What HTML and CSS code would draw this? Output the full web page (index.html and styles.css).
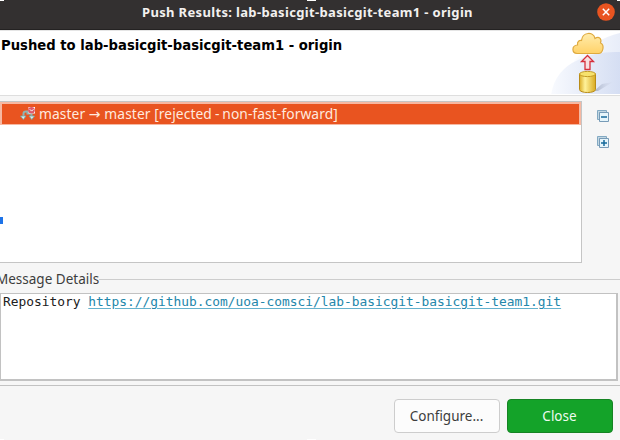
FILE: index.html
```
<!DOCTYPE html>
<html lang="en">
<head>
<meta charset="utf-8">
<title>Push Results</title>
<link rel="stylesheet" href="styles.css">
</head>
<body>
<main class="dialog">
  <header class="titlebar">
    <span class="title">Push Results: lab-basicgit-basicgit-team1 - origin</span>
    <svg class="close-icon" width="18" height="18" viewBox="0 0 18 18"><circle cx="9" cy="9" r="8.8" fill="#e95420"/><path d="M5.8 5.8l6.4 6.4M12.2 5.8l-6.4 6.4" stroke="#fff" stroke-width="1.5"/></svg>
  </header>
  <section class="banner">
    <h1 class="heading">Pushed to lab-basicgit-basicgit-team1 - origin</h1>
    <svg class="banner-art" width="70" height="63" viewBox="0 0 70 63">
      <defs>
        <linearGradient id="sky"><stop offset="0" stop-color="#f8fafe"/><stop offset="1" stop-color="#d5def3"/></linearGradient>
        <linearGradient id="cloud" x2="0" y2="1"><stop offset="0" stop-color="#ffecac"/><stop offset="1" stop-color="#ffd269"/></linearGradient>
        <linearGradient id="gold"><stop offset="0" stop-color="#dcae28"/><stop offset=".35" stop-color="#fff29a"/><stop offset="1" stop-color="#d9aa20"/></linearGradient>
        <linearGradient id="shade"><stop offset="0" stop-color="#a9b2c8"/><stop offset="1" stop-color="#d5dcee" stop-opacity=".3"/></linearGradient>
      </defs>
      <path d="M24 30Q44 8 70 2V64H24Z" fill="url(#sky)" opacity=".55"/>
      <path d="M1 64Q5 39 28 29Q46 20 70 21V64Z" fill="url(#sky)"/>
      <path d="M44 60L52 53L63 51L48 60Z" fill="url(#shade)"/>
      <path d="M27 22.500C21.500 22 21.500 14.500 27.500 14C27 10.500 29.500 9 31.500 9.500C32.500 0.500 43.500 0.500 45 7.500C49 4.500 52 8 50.500 12C55 14 53 22.500 48.500 22.500Z" fill="url(#cloud)" stroke="#dfaa3f" stroke-width="1.200"/>
      <path d="M37.500 24.500L43.500 30.500H40V38.500H35V30.500H31.500Z" fill="#f8dfe0" stroke="#d6303c" stroke-width="1.300"/>
      <path d="M29.500 43V58.500C29.500 62.500 45.500 62.500 45.500 58.500V43Z" fill="url(#gold)" stroke="#b98c18"/>
      <ellipse cx="37.500" cy="43" rx="8" ry="2.600" fill="#f7e26d" stroke="#c49b25"/>
    </svg>
  </section>
  <section class="results">
    <div class="tree">
      <div class="row">
        <svg class="ref-icon" width="16" height="16" viewBox="0 0 16 16"><path d="M3.500 11V7.500Q3.500 5.500 6 5.500H8.500M6.500 7.500h5v4" fill="none" stroke="#8fb5b2" stroke-width="2"/><path d="M.5 10h5.500L3.300 13.500zM9 10h5.500L11.800 13.500z" fill="#dbeeed" stroke="#70a4a5" stroke-width=".8"/><path d="M8.500 1h6.500v6.500H8.500z" fill="#fff"/><circle cx="11.500" cy="4.300" r="3.300" fill="#df5869"/><path d="M9.800 3.300l1.800 1.800 1.800-1.800" fill="none" stroke="#fff"/></svg>
        <span class="row-label">master <span class="arrow">→</span> master [rejected<span class="dash"> - </span>non-fast-forward]</span>
      </div>
      <i class="marker"></i>
    </div>
    <div class="tools">
      <svg width="14" height="14" viewBox="0 0 14 14"><path d="M1.500 10.500v-9h9v2h-7v7z" fill="#c2d7e3" stroke="#83a9c2"/><path d="M3.500 3.500h9v9h-9z" fill="#e6f5fb" stroke="#779bb7"/><path d="M5 8h6" stroke="#16699b" stroke-width="1.500"/></svg>
      <svg width="14" height="14" viewBox="0 0 14 14"><path d="M1.500 10.500v-9h9v2h-7v7z" fill="#c2d7e3" stroke="#83a9c2"/><path d="M3.500 3.500h9v9h-9z" fill="#e6f5fb" stroke="#779bb7"/><path d="M5 8h6M8 5v6" stroke="#16699b" stroke-width="1.500"/></svg>
    </div>
  </section>
  <div class="group-title"><span class="group-label">Message Details</span></div>
  <section class="message"><span>Repository </span><span class="link">https://github.com/uoa-comsci/lab-basicgit-basicgit-team1.git</span></section>
  <footer class="actions">
    <button class="button configure">Configure...</button>
    <button class="button close">Close</button>
  </footer>
  <i class="handle top left"></i><i class="handle top middle"></i><i class="handle top right"></i>
  <i class="handle bottom left"></i><i class="handle bottom middle"></i>
</main>
</body>
</html>
```
FILE: styles.css
```
* { box-sizing: border-box; }
body { margin: 0; }
.dialog {
  position: relative;
  display: flex;
  flex-direction: column;
  width: 620px;
  height: 440px;
  overflow: hidden;
  background: #f6f6f6;
  color: #3d3d3d;
  font-family: "Noto Sans", sans-serif;
  font-size: 13.5px;
  white-space: nowrap;
}
svg { display: block; flex: none; }
.titlebar {
  display: flex;
  align-items: center;
  justify-content: space-between;
  height: 30px;
  padding: 0 5px 5px 142px;
  background: #333030;
  border-bottom: 1px solid #242222;
  color: #f2f0ef;
}
.title { font-size: 13px; font-weight: 700; line-height: 20px; letter-spacing: .34px; }
.banner {
  display: flex;
  justify-content: space-between;
  height: 66px;
  padding-left: 1px;
  background: #fff;
  border-top: 1px solid #e5e5e5;
  border-bottom: 1px solid #dedede;
}
.heading {
  margin: 7px 0 0;
  color: #000;
  font: bold 13.2px/16px "DejaVu Sans", sans-serif;
}
.results { display: flex; height: 167px; padding-top: 5px; }
.tree {
  position: relative;
  width: 582px;
  height: 162px;
  background: #fff;
  border: solid #c5c5c5;
  border-width: 1px 1px 1px 0;
}
.row {
  display: flex;
  align-items: center;
  gap: 3px;
  height: 23px;
  padding: 0 0 1px 18px;
  background: #e95420;
  border: solid #f6b8a2;
  border-width: 2px 2px 1px 2px;
  color: #ffeadf;
}
.row-label { line-height: 18px; font-size: 13.8px; letter-spacing: .08px; }
.dash { letter-spacing: -.4px; }
.arrow { font: 14px/16px "DejaVu Sans", sans-serif; }
.marker { position: absolute; left: 0; top: 115px; width: 3px; height: 7px; background: #1e73e8; }
.tools { display: flex; flex-direction: column; gap: 12px; padding: 8px 0 0 14px; }
.group-title { display: flex; align-items: center; height: 30px; padding-top: 3px; }
.group-label { margin: -2px 0 0 -4px; }
.group-title::after { content: ""; flex: 1; height: 1px; background: #cdcdcd; }
.message {
  width: 618px;
  height: 88px;
  padding-left: 2px;
  background: #fff;
  border: 1px solid #c2c2c2;
  border-right-width: 2px;
  border-bottom-width: 2px;
  color: #202020;
  font: 12.88px/16px "DejaVu Sans Mono", monospace;
  white-space: pre;
}
.link { color: #2386aa; text-decoration: underline; text-decoration-color: #65b2cd; text-underline-offset: 2px; }
.actions {
  display: flex;
  justify-content: flex-end;
  gap: 7px;
  height: 55px;
  margin-top: 4px;
  padding: 13px 7.5px 0 0;
  border-top: 1px solid #c2c2c2;
}
.button {
  width: 106px;
  height: 34px;
  padding: 0;
  border: 1px solid #cdcdcd;
  border-radius: 4px;
  background: #fcfcfc;
  color: #3d3d3d;
  font: 13.5px "Noto Sans", sans-serif;
}
.button.close { border-color: #168424; background: #14a329; color: #effbf0; }
.handle { position: absolute; width: 4px; height: 1px; background: #fff; }
.handle.left { left: 0; }
.handle.middle { left: 307px; width: 9px; }
.handle.right { right: 0; width: 3px; }
.handle.top { top: 0; }
.handle.bottom { bottom: 0; }
```
